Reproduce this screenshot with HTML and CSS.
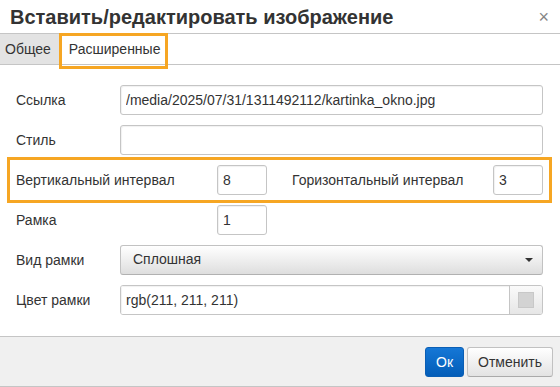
FILE: index.html
```html
<!DOCTYPE html>
<html lang="ru">
<head>
    <meta charset="UTF-8">
    <meta name="viewport" content="width=device-width, initial-scale=1.0">
    <title>Вставить/редактировать изображение</title>
    <link rel="stylesheet" href="styles.css">
</head>
<body>
    <div class="dialog">
        <div class="dialog-head">
            <h1>Вставить/редактировать изображение</h1>
            <button class="close" type="button">×</button>
        </div>
        <div class="tabs">
            <div class="tab">Общее</div>
            <div class="tab tab-active">Расширенные</div>
        </div>
        <form class="dialog-body">
            <div class="form-row">
                <label class="label">Ссылка</label>
                <input class="textbox" type="text" value="/media/2025/07/31/1311492112/kartinka_okno.jpg">
            </div>
            <div class="form-row">
                <label class="label">Стиль</label>
                <input class="textbox" type="text" value="">
            </div>
            <div class="form-row form-row-marked">
                <label class="label label-wide">Вертикальный интервал</label>
                <input class="textbox textbox-small" type="text" value="8">
                <label class="label label-second">Горизонтальный интервал</label>
                <input class="textbox textbox-small" type="text" value="3">
            </div>
            <div class="form-row">
                <label class="label label-wide">Рамка</label>
                <input class="textbox textbox-small" type="text" value="1">
            </div>
            <div class="form-row">
                <label class="label">Вид рамки</label>
                <div class="listbox">
                    <span>Сплошная</span>
                    <i class="caret"></i>
                </div>
            </div>
            <div class="form-row">
                <label class="label">Цвет рамки</label>
                <div class="color-box">
                    <input class="color-input" type="text" value="rgb(211, 211, 211)">
                    <div class="color-btn"><span class="swatch"></span></div>
                </div>
            </div>
        </form>
        <div class="dialog-foot">
            <button class="btn btn-primary" type="button">Ок</button>
            <button class="btn" type="button">Отменить</button>
        </div>
    </div>
</body>
</html>
```

FILE: styles.css
```css
body {
    margin: 0;
    font-family: 'Liberation Sans', Arial, sans-serif;
    font-size: 14px;
    color: #333;
    background-color: #fff;
}
.dialog {
    width: 560px;
    height: 387px;
    display: flex;
    flex-direction: column;
    box-sizing: border-box;
    border-bottom: 1px solid #c5c5c5;
}
.dialog-head {
    height: 33px;
    border-bottom: 1px solid #c5c5c5;
    display: flex;
    align-items: center;
    justify-content: space-between;
    padding: 0 10px;
}
.dialog-head h1 {
    margin: 0;
    font-size: 20px;
    font-weight: bold;
    color: #333;
    line-height: 30px;
}
.close {
    border: none;
    background: none;
    color: #858585;
    font-size: 18px;
    font-family: 'Liberation Sans', Arial, sans-serif;
    padding: 0;
    margin-right: 1px;
    margin-top: 2px;
}
.tabs {
    height: 30px;
    border-bottom: 1px solid #c5c5c5;
    display: flex;
}
.tab {
    line-height: 30px;
    padding: 0 8px 0 5px;
    background-color: #e3e3e3;
    color: #333;
}
.tab-active {
    position: relative;
    background-color: #fff;
    padding: 0 8px 0 10px;
    width: 91px;
}
.tab-active::after {
    content: "";
    position: absolute;
    left: 0;
    right: 0;
    top: -1px;
    bottom: -5px;
    border: 3px solid #f6a623;
}
.dialog-body {
    flex: 1;
    padding: 20px 17px 0 16px;
    margin: 0;
    display: flex;
    flex-direction: column;
    gap: 10px;
}
.form-row {
    display: flex;
    align-items: center;
    height: 30px;
}
.form-row-marked {
    position: relative;
}
.form-row-marked::after {
    content: "";
    position: absolute;
    left: -9px;
    right: -9px;
    top: -8px;
    bottom: -8px;
    border: 3px solid #f6a623;
}
.label {
    width: 104px;
    flex: none;
}
.label-wide {
    width: 201px;
}
.label-second {
    width: 201px;
    margin-left: 25px;
}
.textbox {
    flex: 1;
    height: 30px;
    box-sizing: border-box;
    border: 1px solid #c5c5c5;
    border-radius: 3px;
    box-shadow: inset 1px 1px 1px rgba(0, 0, 0, 0.06);
    padding: 0 5px;
    font-family: 'Liberation Sans', Arial, sans-serif;
    font-size: 14px;
    color: #333;
    min-width: 0;
}
.textbox-small {
    flex: none;
    width: 50px;
}
.listbox {
    flex: 1;
    height: 30px;
    box-sizing: border-box;
    border: 1px solid #c2c2c2;
    border-bottom-color: #b1b1b1;
    border-radius: 3px;
    background: linear-gradient(#fff, #dedede);
    display: flex;
    align-items: center;
    justify-content: space-between;
    padding: 0 9px 2px 12px;
}
.caret {
    width: 0;
    height: 0;
    border-left: 4px solid transparent;
    border-right: 4px solid transparent;
    border-top: 4px solid #333;
    margin-top: 2px;
}
.color-box {
    flex: 1;
    height: 30px;
    box-sizing: border-box;
    border: 1px solid #c5c5c5;
    border-radius: 3px;
    display: flex;
    overflow: hidden;
}
.color-input {
    flex: 1;
    border: none;
    padding: 0 5px;
    font-family: 'Liberation Sans', Arial, sans-serif;
    font-size: 14px;
    color: #333;
    min-width: 0;
    box-shadow: inset 1px 1px 1px rgba(0, 0, 0, 0.06);
}
.color-btn {
    width: 32px;
    border-left: 1px solid #c5c5c5;
    background: linear-gradient(#fafafa, #e6e6e6);
    display: flex;
    align-items: center;
    justify-content: center;
}
.swatch {
    width: 16px;
    height: 16px;
    background-color: #d3d3d3;
    border: 1px solid #c8c8c8;
    box-sizing: border-box;
}
.dialog-foot {
    height: 50px;
    border-top: 1px solid #c5c5c5;
    background-color: #f0f0f0;
    display: flex;
    justify-content: flex-end;
    gap: 3px;
    padding: 10px 7px 0 0;
    box-sizing: border-box;
}
.btn {
    height: 30px;
    padding: 0 10px;
    border: 1px solid #c1c1c1;
    border-bottom-color: #aaa;
    border-radius: 3px;
    background: linear-gradient(#fff, #e3e3e3);
    font-family: 'Liberation Sans', Arial, sans-serif;
    font-size: 14px;
    color: #333;
}
.btn-primary {
    width: 39px;
    padding: 0;
    border-color: #0a5eb4;
    background: linear-gradient(#1577d6, #035db8);
    color: #fff;
}
```
